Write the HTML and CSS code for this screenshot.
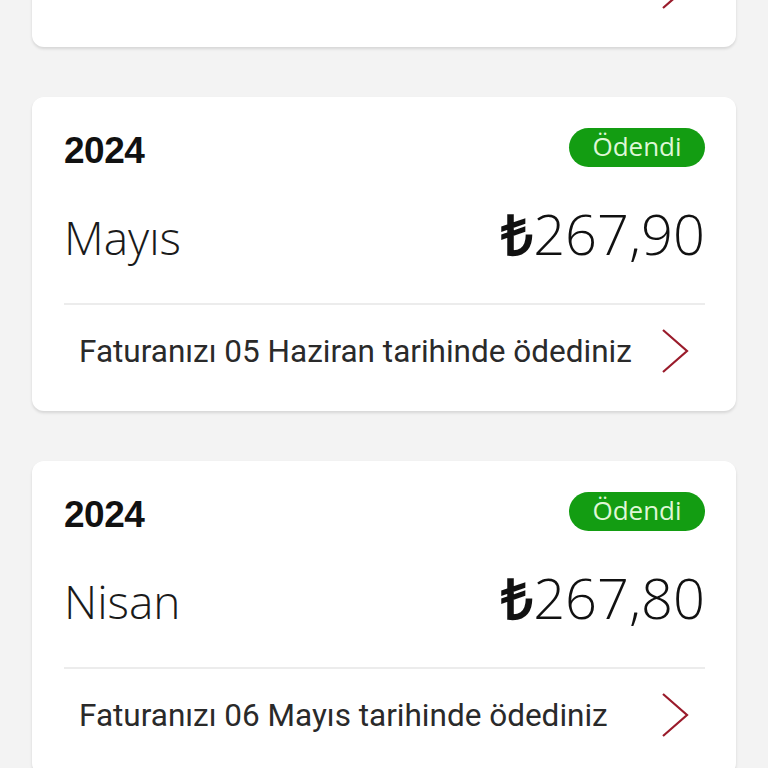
FILE: index.html
```html
<!DOCTYPE html>
<html lang="tr">
<head>
<meta charset="utf-8">
<link rel="stylesheet" href="styles.css">
</head>
<body>
<div class="list">
  <div class="card">
    <div class="head"><span class="year">2024</span><span class="badge">Ödendi</span></div>
    <div class="main"><span class="month">Haziran</span><span class="amount"><b class="tl">₺</b>267,90</span></div>
    <div class="foot"><span class="note">Faturanızı 05 Temmuz tarihinde ödediniz</span>
      <svg class="chev" width="28" height="46" viewBox="0 0 28 46"><path d="M2 2 L26 23 L2 44" fill="none" stroke="#9a1b2b" stroke-width="2.2"/></svg></div>
  </div>
  <div class="card">
    <div class="head"><span class="year">2024</span><span class="badge">Ödendi</span></div>
    <div class="main"><span class="month">Mayıs</span><span class="amount"><b class="tl">₺</b>267,90</span></div>
    <div class="foot"><span class="note">Faturanızı 05 Haziran tarihinde ödediniz</span>
      <svg class="chev" width="28" height="46" viewBox="0 0 28 46"><path d="M2 2 L26 23 L2 44" fill="none" stroke="#9a1b2b" stroke-width="2.2"/></svg></div>
  </div>
  <div class="card">
    <div class="head"><span class="year">2024</span><span class="badge">Ödendi</span></div>
    <div class="main"><span class="month">Nisan</span><span class="amount"><b class="tl">₺</b>267,80</span></div>
    <div class="foot"><span class="note">Faturanızı 06 Mayıs tarihinde ödediniz</span>
      <svg class="chev" width="28" height="46" viewBox="0 0 28 46"><path d="M2 2 L26 23 L2 44" fill="none" stroke="#9a1b2b" stroke-width="2.2"/></svg></div>
  </div>
</div>
</body>
</html>
```

FILE: styles.css
```css
html, body {
  margin: 0;
  padding: 0;
  background: #f3f3f3;
  height: 768px;
  overflow: hidden;
}
.list {
  display: flex;
  flex-direction: column;
  gap: 50px;
  margin-top: -267px;
  padding: 0 32px;
}
.card {
  background: #fff;
  border-radius: 12px;
  box-shadow: 0 2px 3px rgba(0,0,0,0.12);
  padding: 31px 31px 0 32px;
  height: 283px;
  font-family: "Open Sans", "Liberation Sans", sans-serif;
  color: #1c1c1c;
}
.head {
  display: flex;
  justify-content: space-between;
  align-items: center;
  height: 39px;
}
.year {
  font-family: "Liberation Sans", sans-serif;
  font-weight: 700;
  font-size: 37px;
  color: #111;
  letter-spacing: -0.5px;
  margin-top: 7px;
}
.badge {
  background: #139d12;
  color: #dff7d6;
  border-radius: 20px;
  height: 39px;
  width: 136px;
  display: flex;
  align-items: center;
  justify-content: center;
  font-size: 26px;
  box-sizing: border-box;
  padding-bottom: 3px;
}
.main {
  display: flex;
  justify-content: space-between;
  align-items: baseline;
  height: 138px;
  border-bottom: 2px solid #ececec;
  box-sizing: border-box;
  padding-top: 38px;
}
.month {
  font-weight: 300;
  font-size: 46px;
  line-height: 1;
  color: #1a1a1a;
}
.amount {
  font-weight: 300;
  font-size: 56px;
  line-height: 1;
  color: #111;
}
.tl {
  font-weight: 700;
}
.foot {
  display: flex;
  align-items: center;
  justify-content: space-between;
  height: 106px;
  box-sizing: border-box;
  padding: 0 16px 14px 15px;
}
.note {
  font-family: Roboto, "Open Sans", sans-serif;
  font-size: 31.5px;
  color: #2a2a2a;
}
.chev {
  display: block;
}
```
